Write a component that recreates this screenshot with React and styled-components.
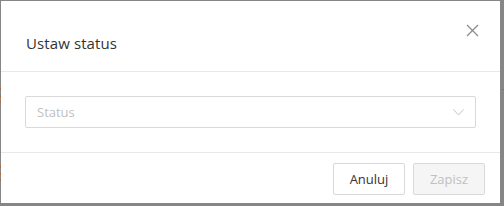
import React from "react";
import styled, { createGlobalStyle } from "styled-components";

const Global = createGlobalStyle`
  html, body { margin: 0; padding: 0; }
  body {
    width: 504px;
    height: 206px;
    overflow: hidden;
    background: #868686;
    font-family: "Open Sans", "Noto Sans", sans-serif;
  }
`;

const Backdrop = styled.div`
  position: relative;
  width: 504px;
  height: 206px;
  box-sizing: border-box;
  padding: 1px 4px 3px 1px;
  background: #868686;
`;

const Speck = styled.span`
  position: absolute;
  width: 1px;
  height: 2px;
  background: #b8642a;
`;

const Modal = styled.div`
  width: 499px;
  height: 202px;
  background: #fff;
  display: flex;
  flex-direction: column;
  box-sizing: border-box;
`;

const Header = styled.div`
  height: 71px;
  box-sizing: border-box;
  padding: 0 21px 0 25px;
  display: flex;
  align-items: center;
  justify-content: space-between;
  border-bottom: 1px solid #e9e9e9;
`;

const Title = styled.h2`
  margin: 0;
  padding-top: 14px;
  font-size: 15px;
  font-weight: 400;
  color: #333;
  letter-spacing: 0.1px;
`;

const Close = styled.button`
  border: 0;
  background: none;
  padding: 0;
  width: 14px;
  height: 14px;
  margin-bottom: 12px;
  display: flex;
  align-items: center;
  justify-content: center;
  cursor: pointer;
`;

const Body = styled.div`
  height: 81px;
  box-sizing: border-box;
  padding: 24px 24px 0 24px;
  border-bottom: 1px solid #e9e9e9;
`;

const Select = styled.div`
  height: 32px;
  box-sizing: border-box;
  border: 1px solid #d9d9d9;
  border-radius: 2px;
  display: flex;
  align-items: center;
  justify-content: space-between;
  padding: 0 11px 0 11px;
`;

const Placeholder = styled.span`
  font-size: 13px;
  color: #bfbfbf;
`;

const Footer = styled.div`
  flex: 1;
  display: flex;
  justify-content: flex-end;
  gap: 8px;
  padding: 10px 15px 0 0;
`;

const Button = styled.button`
  width: 72px;
  height: 32px;
  box-sizing: border-box;
  border: 1px solid #d9d9d9;
  border-radius: 2px;
  background: ${(p) => (p.disabled ? "#f5f5f5" : "#fff")};
  color: ${(p) => (p.disabled ? "#c0c0c0" : "#333")};
  font-family: "Open Sans", "Noto Sans", sans-serif;
  font-size: 13px;
  padding: 0;
  cursor: ${(p) => (p.disabled ? "not-allowed" : "pointer")};
`;

export default function App() {
  return (
    <>
      <Global />
      <Backdrop>
        <Speck style={{ left: 0, top: 88 }} />
        <Speck style={{ left: 0, top: 95 }} />
        <Speck style={{ left: 0, top: 101 }} />
        <Speck style={{ left: 0, top: 166 }} />
        <Speck style={{ left: 0, top: 173 }} />
        <Speck style={{ left: 0, top: 179 }} />
        <Speck style={{ left: 502, top: 89, width: 2, height: 1 }} />
        <Modal>
          <Header>
            <Title>Ustaw status</Title>
            <Close aria-label="Zamknij">
              <svg width="13" height="13" viewBox="0 0 13 13">
                <path d="M1 1L12 12M12 1L1 12" stroke="#8c8c8c" strokeWidth="1.3" fill="none" />
              </svg>
            </Close>
          </Header>
          <Body>
            <Select>
              <Placeholder>Status</Placeholder>
              <svg width="11" height="7" viewBox="0 0 11 7">
                <path d="M0.5 0.5L5.5 6L10.5 0.5" stroke="#c4c4c4" strokeWidth="1" fill="none" />
              </svg>
            </Select>
          </Body>
          <Footer>
            <Button>Anuluj</Button>
            <Button disabled>Zapisz</Button>
          </Footer>
        </Modal>
      </Backdrop>
    </>
  );
}
